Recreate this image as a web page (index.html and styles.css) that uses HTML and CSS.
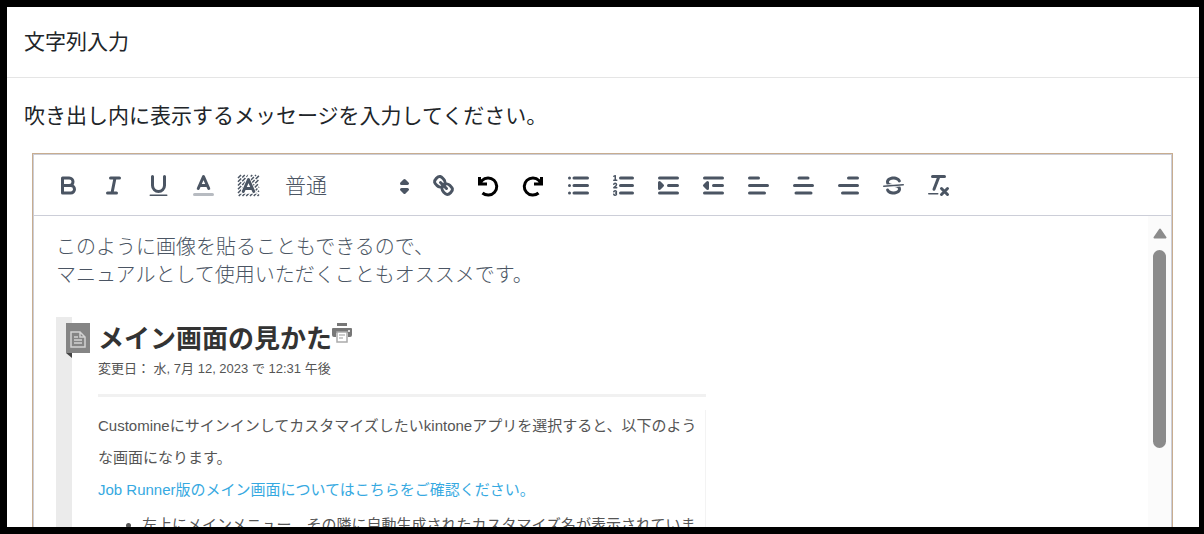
FILE: index.html
```html
<!DOCTYPE html>
<html lang="ja">
<head>
<meta charset="utf-8">
<title>文字列入力</title>
<link rel="stylesheet" href="styles.css">
</head>
<body>
<main class="dialog">
  <header class="dialog-header"><h1 class="dialog-title">文字列入力</h1></header>
  <section class="dialog-body">
    <p class="message">吹き出し内に表示するメッセージを入力してください。</p>
    <div class="editor">
      <div class="toolbar" role="toolbar" aria-label="書式">
        <button class="tool" type="button" aria-label="太字"><svg class="icon" viewBox="0 0 18 18"><path class="line" d="M5,4H9.5A2.5,2.5,0,0,1,12,6.5v0A2.5,2.5,0,0,1,9.500,9H5A0,0,0,0,1,5,9V4A0,0,0,0,1,5,4Z"/><path class="line" d="M5,9h5.500A2.500,2.500,0,0,1,13,11.500v0A2.500,2.500,0,0,1,10.500,14H5a0,0,0,0,1,0,0V9A0,0,0,0,1,5,9Z"/></svg></button>
        <button class="tool" type="button" aria-label="斜体"><svg class="icon" viewBox="0 0 18 18"><path class="line" d="M7 4H13M5 14H11M8 14L10 4"/></svg></button>
        <button class="tool" type="button" aria-label="下線"><svg class="icon" viewBox="0 0 18 18"><path class="line" d="M5,3V9a4.012,4.012,0,0,0,4,4H9a4.012,4.012,0,0,0,4-4V3"/><rect class="solid" height="1" rx=".5" ry=".5" width="12" x="3" y="15"/></svg></button>
        <button class="tool" type="button" aria-label="文字色"><svg class="icon" viewBox="0 0 18 18"><path class="line faded" d="M3 15H15"/><path class="line" d="M5.500 11L9 3L12.500 11M11.630 9H6.380"/></svg></button>
        <button class="tool" type="button" aria-label="背景色"><svg class="icon" viewBox="0 0 18 18"><path class="hatch" d="M2 4L4 2M2 6.500L6.500 2M2 9L9 2M2 11.500L11.500 2M2 14L14 2M2.500 16L16 2.500M5 16L16 5M7.500 16L16 7.500M10 16L16 10M12.500 16L16 12.500M15 16L16 15"/><path class="halo" d="M5.500 13L9 5L12.500 13Z"/><path class="line" d="M5.500 13L9 5L12.500 13M11.630 11H6.380"/></svg></button>
        <label class="picker"><select class="picker-select" aria-label="文字サイズ"><option>普通</option></select><svg class="icon picker-arrows" viewBox="0 0 18 18"><path class="line solid" d="M7 11L9 13L11 11ZM7 7L9 5L11 7Z"/></svg></label>
        <button class="tool" type="button" aria-label="リンク"><svg class="icon" viewBox="0 0 18 18"><path class="line" d="M7 7L11 11"/><path class="line" d="M8.900,4.577a3.476,3.476,0,0,1,.36,4.679A3.476,3.476,0,0,1,4.577,8.900C3.185,7.500,2.035,6.400,4.217,4.217S7.500,3.185,8.900,4.577Z"/><path class="line" d="M13.423,9.100a3.476,3.476,0,0,0-4.679-.36,3.476,3.476,0,0,0,.36,4.679c1.392,1.392,2.500,2.542,4.679.36S14.815,10.500,13.423,9.100Z"/></svg></button>
        <button class="tool" type="button" aria-label="元に戻す"><svg class="icon history" viewBox="0 0 27 27"><path d="M7.500 21A8.600 8.600 0 1 0 7 8.500L5 11M4.500 5V12H12"/></svg></button>
        <button class="tool" type="button" aria-label="やり直す"><svg class="icon history" viewBox="0 0 27 27"><path d="M18.500 21A8.600 8.600 0 1 1 19 8.500L21 11M21.500 5V12H14"/></svg></button>
        <button class="tool" type="button" aria-label="箇条書き"><svg class="icon" viewBox="0 0 18 18"><path class="line" d="M6 4H15M6 9H15M6 14H15"/><path class="line" d="M3 4H3M3 9H3M3 14H3"/></svg></button>
        <button class="tool" type="button" aria-label="番号付きリスト"><svg class="icon" viewBox="0 0 18 18"><path class="line" d="M7 4H15M7 9H15M7 14H15"/><path class="thin" d="M2.500 5.500H4.500"/><path class="solid" d="M3.500,6A0.500,0.500,0,0,1,3,5.500V3.085l-0.276.138A0.500,0.500,0,0,1,2.053,3c-0.124-.247-0.023-0.324.224-0.447l1-.500A0.500,0.500,0,0,1,4,2.500v3A0.500,0.500,0,0,1,3.500,6Z"/><path class="thin" d="M4.500,10.500h-2c0-.234,1.850-1.076,1.850-2.234A0.959,0.959,0,0,0,2.500,8.156M2.500,14.846a0.959,0.959,0,0,0,1.850-.109A0.700,0.700,0,0,0,3.750,14a0.688,0.688,0,0,0,.6-0.736,0.959,0.959,0,0,0-1.850-.109"/></svg></button>
        <button class="tool" type="button" aria-label="字下げ"><svg class="icon" viewBox="0 0 18 18"><path class="line" d="M3 14H15M3 4H15M9 9H15"/><path class="line solid" d="M3 7V11L5 9Z"/></svg></button>
        <button class="tool" type="button" aria-label="字上げ"><svg class="icon" viewBox="0 0 18 18"><path class="line" d="M3 14H15M3 4H15M9 9H15"/><path class="line solid" d="M5 7V11L3 9Z"/></svg></button>
        <button class="tool" type="button" aria-label="左揃え"><svg class="icon" viewBox="0 0 18 18"><path class="line" d="M3 9H15M3 14H13M3 4H9"/></svg></button>
        <button class="tool" type="button" aria-label="中央揃え"><svg class="icon" viewBox="0 0 18 18"><path class="line" d="M3 9H15M4 14H14M6 4H12"/></svg></button>
        <button class="tool" type="button" aria-label="右揃え"><svg class="icon" viewBox="0 0 18 18"><path class="line" d="M3 9H15M5 14H15M9 4H15"/></svg></button>
        <button class="tool" type="button" aria-label="取り消し線"><svg class="icon" viewBox="0 0 18 18"><path class="thin" d="M15.500 8.500L2.500 9.500"/><path class="solid" d="M9.007,8C6.542,7.791,6,7.519,6,6.500,6,5.792,7.283,5,9,5c1.571,0,2.765.679,2.969,1.309a1,1,0,0,0,1.900-.617C13.356,4.106,11.354,3,9,3,6.200,3,4,4.538,4,6.500a3.200,3.200,0,0,0,.5,1.843Z"/><path class="solid" d="M8.984,10C11.457,10.208,12,10.479,12,11.500c0,0.708-1.283,1.500-3,1.500-1.571,0-2.765-.679-2.969-1.309a1,1,0,1,0-1.900.617C4.644,13.894,6.646,15,9,15c2.800,0,5-1.538,5-3.500a3.200,3.200,0,0,0-.5-1.843Z"/></svg></button>
        <button class="tool" type="button" aria-label="書式をクリア"><svg class="icon" viewBox="0 0 18 18"><path class="line" d="M5 3H13M6 11.500L9.300 3"/><path class="line" d="M11 11L15 15M15 11L11 15"/><rect class="solid" height="1" rx=".5" width="7" x="2" y="14"/></svg></button>
      </div>
      <div class="editor-area">
        <div class="editor-content">
          <p class="text">このように画像を貼ることもできるので、<br>マニュアルとして使用いただくこともオススメです。</p>
          <article class="capture">
            <svg class="doc-badge" viewBox="0 0 24 36" aria-hidden="true"><path fill="#858585" d="M0 0H24V30H0Z"/><path fill="#444" d="M0 30H6V35Z"/><path fill="none" stroke="#d2d2d2" stroke-width="1.500" d="M5 9H14L19 14V24H5ZM14 9V14H19M8 14H12M8 17H16M8 20H16"/></svg>
            <div class="capture-body">
              <div class="capture-heading">
                <h2 class="capture-title">メイン画面の見かた</h2>
                <svg class="printer" viewBox="0 0 20 22" aria-hidden="true"><path fill="#777" d="M5 1H15V4H5ZM0 7Q0 6 1 6H19Q20 6 20 7V13Q20 15 18 15H16V11H4V15H2Q0 15 0 13Z"/><path fill="#fff" stroke="#aaa" stroke-width="1.500" d="M5 10H15V20H5Z"/><path stroke="#999" d="M7 13H13M7 16H11"/><path fill="#ddd" d="M16 8H18V10H16Z"/></svg>
              </div>
              <p class="capture-date">変更日： 水, 7月 12, 2023 で 12:31 午後</p>
              <div class="capture-text">
                <p>Customineにサインインしてカスタマイズしたいkintoneアプリを選択すると、以下のよう<br>な画面になります。</p>
                <p><a class="capture-link" href="#jobrunner">Job Runner版のメイン画面についてはこちらをご確認ください。</a></p>
                <ul class="capture-list"><li>左上にメインメニュー、その隣に自動生成されたカスタマイズ名が表示されていま</li></ul>
              </div>
            </div>
          </article>
        </div>
        <div class="scrollbar" aria-hidden="true"><svg class="scroll-up" viewBox="0 0 14 11"><path d="M7 1.500L12.500 9.500H1.500Z"/></svg><div class="scroll-thumb"></div></div>
      </div>
    </div>
  </section>
</main>
</body>
</html>
```
FILE: styles.css
```css
* { box-sizing: border-box; }
body {
  margin: 0;
  font-family: "Noto Sans CJK JP", sans-serif;
  color: #212529;
}
h1, h2, p, ul { margin: 0; }
.dialog {
  display: flex;
  flex-direction: column;
  height: 100vh;
  border: 7px solid #000;
  border-right-width: 5px;
  background: #fff;
  overflow: hidden;
}
.dialog-header {
  padding: 16px 17px 20px;
  border-bottom: 1px solid #e5e5e5;
}
.dialog-title, .message {
  font-size: 21px;
  font-weight: 400;
  line-height: 34px;
}
.dialog-body {
  display: flex;
  flex: 1;
  flex-direction: column;
  min-height: 0;
  padding: 19px 26px 0 17px;
}
.editor {
  display: flex;
  flex: 1;
  flex-direction: column;
  min-height: 0;
  margin: 22px 0 0 8px;
  border: 1px solid #c8ad90;
  border-bottom: 0;
}
.toolbar {
  display: flex;
  align-items: center;
  padding: 12px 12px 11px;
  border: 1px solid #ccced8;
}
.tool {
  display: flex;
  justify-content: center;
  width: 45px;
  padding: 5px 0;
  border: 0;
  background: none;
}
.icon { display: block; width: 27px; height: 27px; }
.line, .thin, .hatch {
  fill: none;
  stroke: #4b5563;
  stroke-width: 2;
  stroke-linecap: round;
  stroke-linejoin: round;
}
.thin { stroke-width: 1; }
.hatch { stroke-width: 1; stroke-linecap: butt; stroke-dasharray: 3 1; }
.halo { fill: #fff; stroke: #fff; stroke-width: 3; }
.faded { opacity: 0.4; }
.solid { fill: #4b5563; }
.history path { fill: none; stroke: #000; stroke-width: 3; }
.picker { position: relative; width: 150px; }
.picker-select {
  display: block;
  width: 100%;
  padding: 0 14px 4px;
  border: 0;
  background: none;
  color: #4b5563;
  appearance: none;
  font: 300 21px/32px "Noto Sans CJK JP", sans-serif;
}
.picker-arrows { position: absolute; top: 5px; right: 3px; pointer-events: none; }
.editor-area {
  display: flex;
  flex: 1;
  min-height: 0;
  border: solid #ccced8;
  border-width: 0 1px;
}
.editor-content { flex: 1; padding: 16px 22px 0; overflow: hidden; }
.text { color: #4b5563; font-size: 20px; font-weight: 300; line-height: 28px; }
.capture {
  display: flex;
  max-width: 650px;
  margin-top: 29px;
  border-left: 16px solid #ebebeb;
  color: #555;
}
.doc-badge { flex: none; width: 24px; height: 36px; margin: 6px 8px 0 -6px; }
.capture-body { flex: 1; min-width: 0; }
.capture-heading { display: flex; }
.capture-title { color: #333; font-size: 26px; line-height: 40px; }
.printer { width: 20px; height: 22px; margin-top: 5px; }
.capture-date {
  padding: 2px 0 15px;
  border-bottom: 3px solid #f1f1f1;
  font-family: "Liberation Sans", "Noto Sans CJK JP", sans-serif;
  font-size: 13px;
  line-height: 20px;
}
.capture-text {
  margin-top: 13px;
  border-right: 1px solid #f3f3f3;
  font-family: "Liberation Sans", "Noto Sans CJK JP", sans-serif;
  font-size: 15px;
  line-height: 32px;
  white-space: nowrap;
}
.capture-link { color: #36a9e1; text-decoration: none; }
.capture-list { margin-top: 3px; padding-left: 44px; }
.scrollbar {
  display: flex;
  flex-direction: column;
  align-items: center;
  gap: 11px;
  width: 23px;
  padding: 12px 0;
  background: #fbfbfb;
}
.scroll-up {
  width: 14px;
  height: 11px;
  fill: #8b8b8b;
  stroke: #8b8b8b;
  stroke-width: 2;
  stroke-linejoin: round;
}
.scroll-thumb { width: 13px; height: 69%; border-radius: 7px; background: #8b8b8b; }
```
